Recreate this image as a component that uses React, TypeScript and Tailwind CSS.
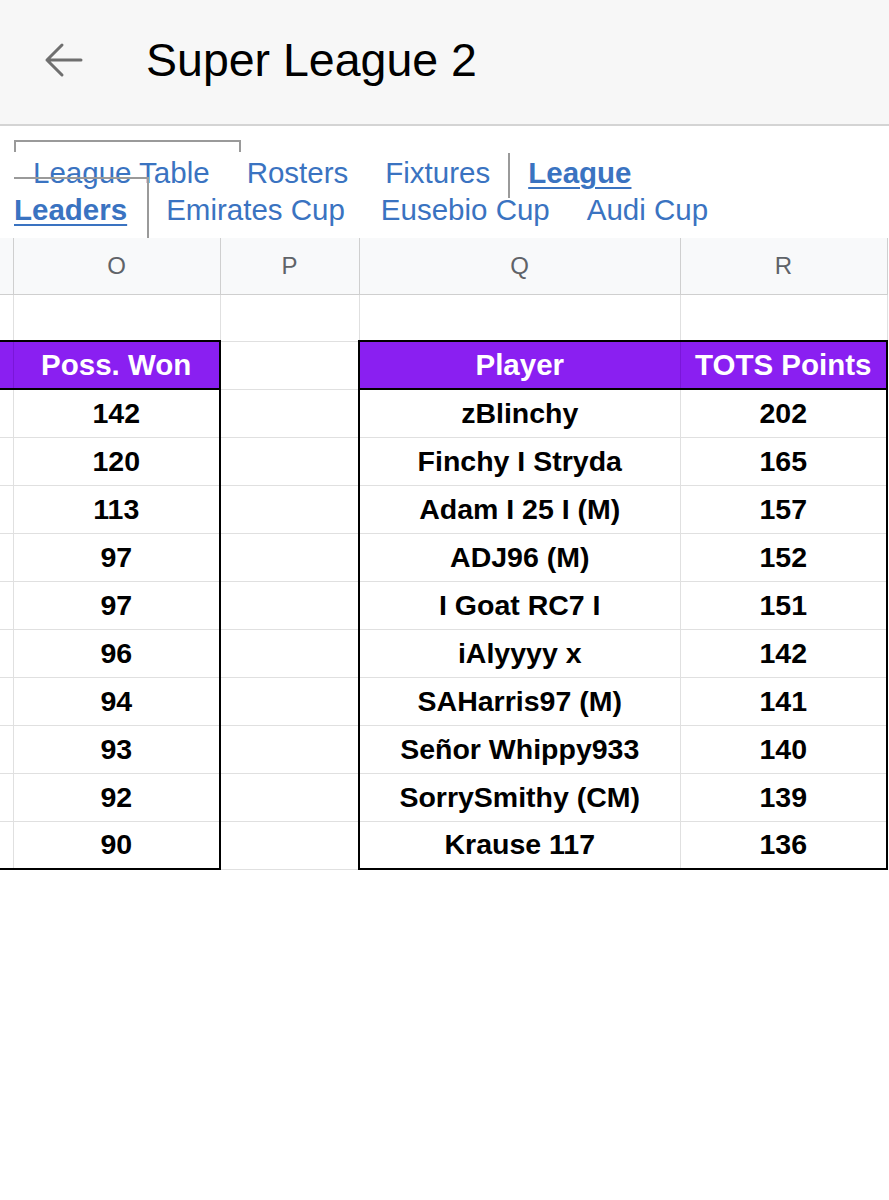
import React from "react";

const leftVals = [142, 120, 113, 97, 97, 96, 94, 93, 92, 90];

const players = [
  ["zBlinchy", 202],
  ["Finchy I Stryda", 165],
  ["Adam I 25 I (M)", 157],
  ["ADJ96 (M)", 152],
  ["I Goat RC7 I", 151],
  ["iAlyyyy x", 142],
  ["SAHarris97 (M)", 141],
  ["Señor Whippy933", 140],
  ["SorrySmithy (CM)", 139],
  ["Krause 117", 136],
];

const BackArrow = () => (
  <svg width="40" height="40" viewBox="0 0 40 40" fill="none">
    <path
      d="M38 20H4M19 5L4 20l15 15"
      stroke="#6f6f6f"
      strokeWidth="3"
      strokeLinecap="round"
      strokeLinejoin="round"
    />
  </svg>
);

function App() {
  return (
    <div className="w-[889px] h-[1200px] bg-white font-['Liberation_Sans',Arial,sans-serif] overflow-hidden">
      {/* top bar */}
      <div className="h-[126px] bg-[#f7f7f7] border-b-2 border-[#d4d4d4] flex items-center">
        <div className="ml-[43px] mt-[-4px]">
          <BackArrow />
        </div>
        <div className="ml-[63px] mt-[-4px] text-[46.5px] text-black leading-none">
          Super League 2
        </div>
      </div>

      {/* sheet tabs */}
      <div className="relative h-[112px] text-[29.5px] text-[#3a73c1] leading-[37px]">
        <div className="absolute left-[14px] top-[14px] w-[227px] h-[12px] border-t-2 border-x-2 border-[#9a9a9a]" />
        <div className="absolute left-[14px] top-[51px] w-[135px] h-[61px] border-t-2 border-r-2 border-[#9a9a9a]" />
        <div className="absolute left-[508px] top-[27px] h-[45px] border-l-2 border-[#9a9a9a]" />
        <div className="pt-[28px]">
          <div className="flex pl-[33px]">
            <span>League Table</span>
            <span className="ml-[37px]">Rosters</span>
            <span className="ml-[37px]">Fixtures</span>
            <span className="ml-[38px] font-bold underline underline-offset-[4px] decoration-2">
              League
            </span>
          </div>
          <div className="flex pl-[14px]">
            <span className="font-bold underline underline-offset-[4px] decoration-2">
              Leaders
            </span>
            <span className="ml-[39px]">Emirates Cup</span>
            <span className="ml-[36px]">Eusebio Cup</span>
            <span className="ml-[37px]">Audi Cup</span>
          </div>
        </div>
      </div>

      {/* grid */}
      <table className="table-fixed border-collapse w-[887px] text-center">
        <colgroup>
          <col className="w-[13px]" />
          <col className="w-[207px]" />
          <col className="w-[139px]" />
          <col className="w-[321px]" />
          <col className="w-[207px]" />
        </colgroup>
        <tbody>
          <tr className="h-[56px] bg-[#f8f9fa] text-[24px] text-[#5f6368]">
            <td className="border-r border-b border-[#cfcfcf]" />
            <td className="border-x border-b border-[#cfcfcf]">O</td>
            <td className="border-x border-b border-[#cfcfcf]">P</td>
            <td className="border-x border-b border-[#cfcfcf]">Q</td>
            <td className="border-x border-b border-[#cfcfcf]">R</td>
          </tr>
          <tr className="h-[47px]">
            <td className="border-r border-b border-[#e0e0e0]" />
            <td className="border border-[#e0e0e0]" />
            <td className="border border-[#e0e0e0]" />
            <td className="border border-[#e0e0e0]" />
            <td className="border border-[#e0e0e0]" />
          </tr>
          <tr className="h-[48px] text-[29.5px] font-bold text-white">
            <td className="bg-[#8a1ff1] border-y-2 border-black border-r border-r-[#7a16d8]" />
            <td className="bg-[#8a1ff1] border-y-2 border-r-2 border-black">Poss. Won</td>
            <td className="border border-[#e0e0e0]" />
            <td className="bg-[#8a1ff1] border-y-2 border-l-2 border-black border-r border-r-[#7a16d8]">
              Player
            </td>
            <td className="bg-[#8a1ff1] border-y-2 border-r-2 border-black">TOTS Points</td>
          </tr>
          {players.map(([name, pts], i) => {
            const last = i === players.length - 1;
            return (
              <tr key={i} className="h-[48px] text-[28.5px] font-bold text-black">
                <td
                  className={
                    last
                      ? "border-r border-r-[#e0e0e0] border-b-2 border-b-black"
                      : "border-r border-b border-[#e0e0e0]"
                  }
                />
                <td
                  className={
                    last
                      ? "border-l border-l-[#e0e0e0] border-r-2 border-r-black border-b-2 border-b-black"
                      : "border-l border-b border-[#e0e0e0] border-r-2 border-r-black"
                  }
                >
                  {leftVals[i]}
                </td>
                <td className="border-b border-[#e0e0e0]" />
                <td
                  className={
                    last
                      ? "border-l-2 border-black border-b-2 border-r border-r-[#e0e0e0]"
                      : "border-l-2 border-l-black border-b border-r border-[#e0e0e0]"
                  }
                >
                  {name}
                </td>
                <td
                  className={
                    last
                      ? "border-r-2 border-b-2 border-black"
                      : "border-r-2 border-r-black border-b border-b-[#e0e0e0]"
                  }
                >
                  {pts}
                </td>
              </tr>
            );
          })}
        </tbody>
      </table>
    </div>
  );
}

export default App;
